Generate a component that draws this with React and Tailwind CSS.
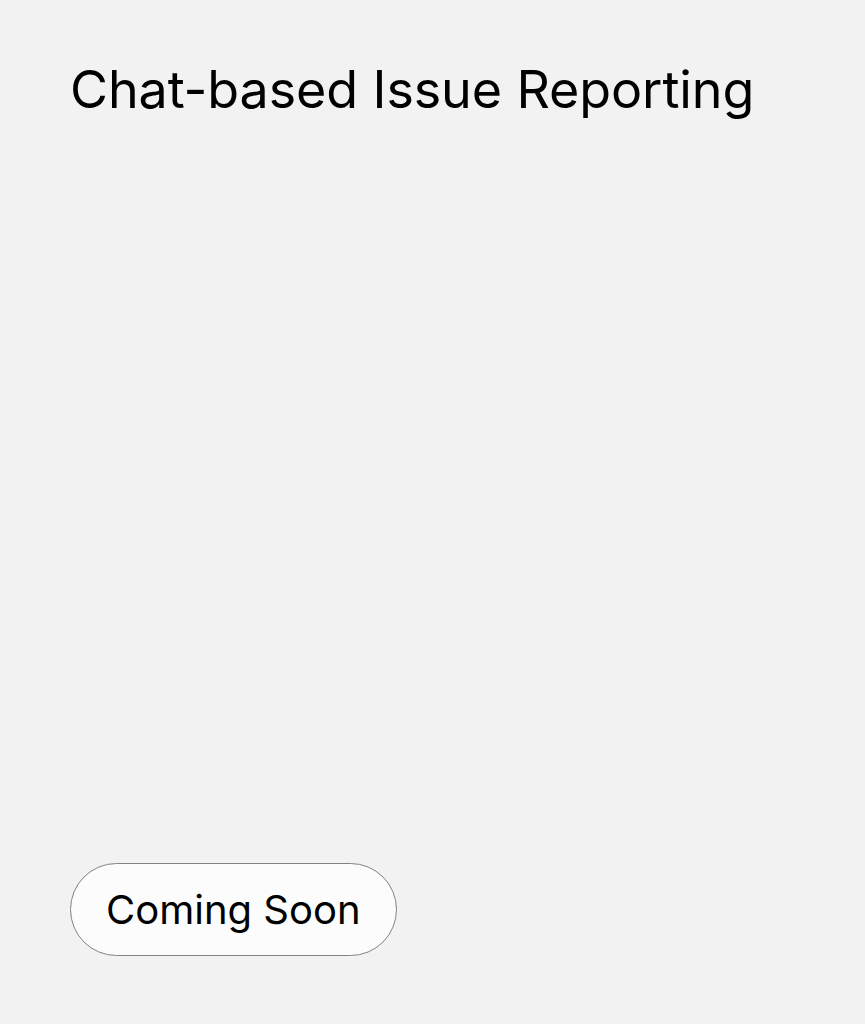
export default function App() {
  return (
    <div
      className="flex h-[1024px] w-full flex-col justify-between bg-[#f2f2f2] px-[70px] pt-[59px] pb-[68px] text-black"
      style={{ fontFamily: 'Inter, "Noto Sans", sans-serif' }}
    >
      <h1 className="text-[52px] leading-[1.2] font-normal tracking-[-0.1px]">Chat-based Issue Reporting</h1>
      <div>
        <button className="h-[93px] rounded-full border border-[#828282] bg-[#fcfcfc] px-[35px] text-[40px] font-normal">
          Coming Soon
        </button>
      </div>
    </div>
  );
}
